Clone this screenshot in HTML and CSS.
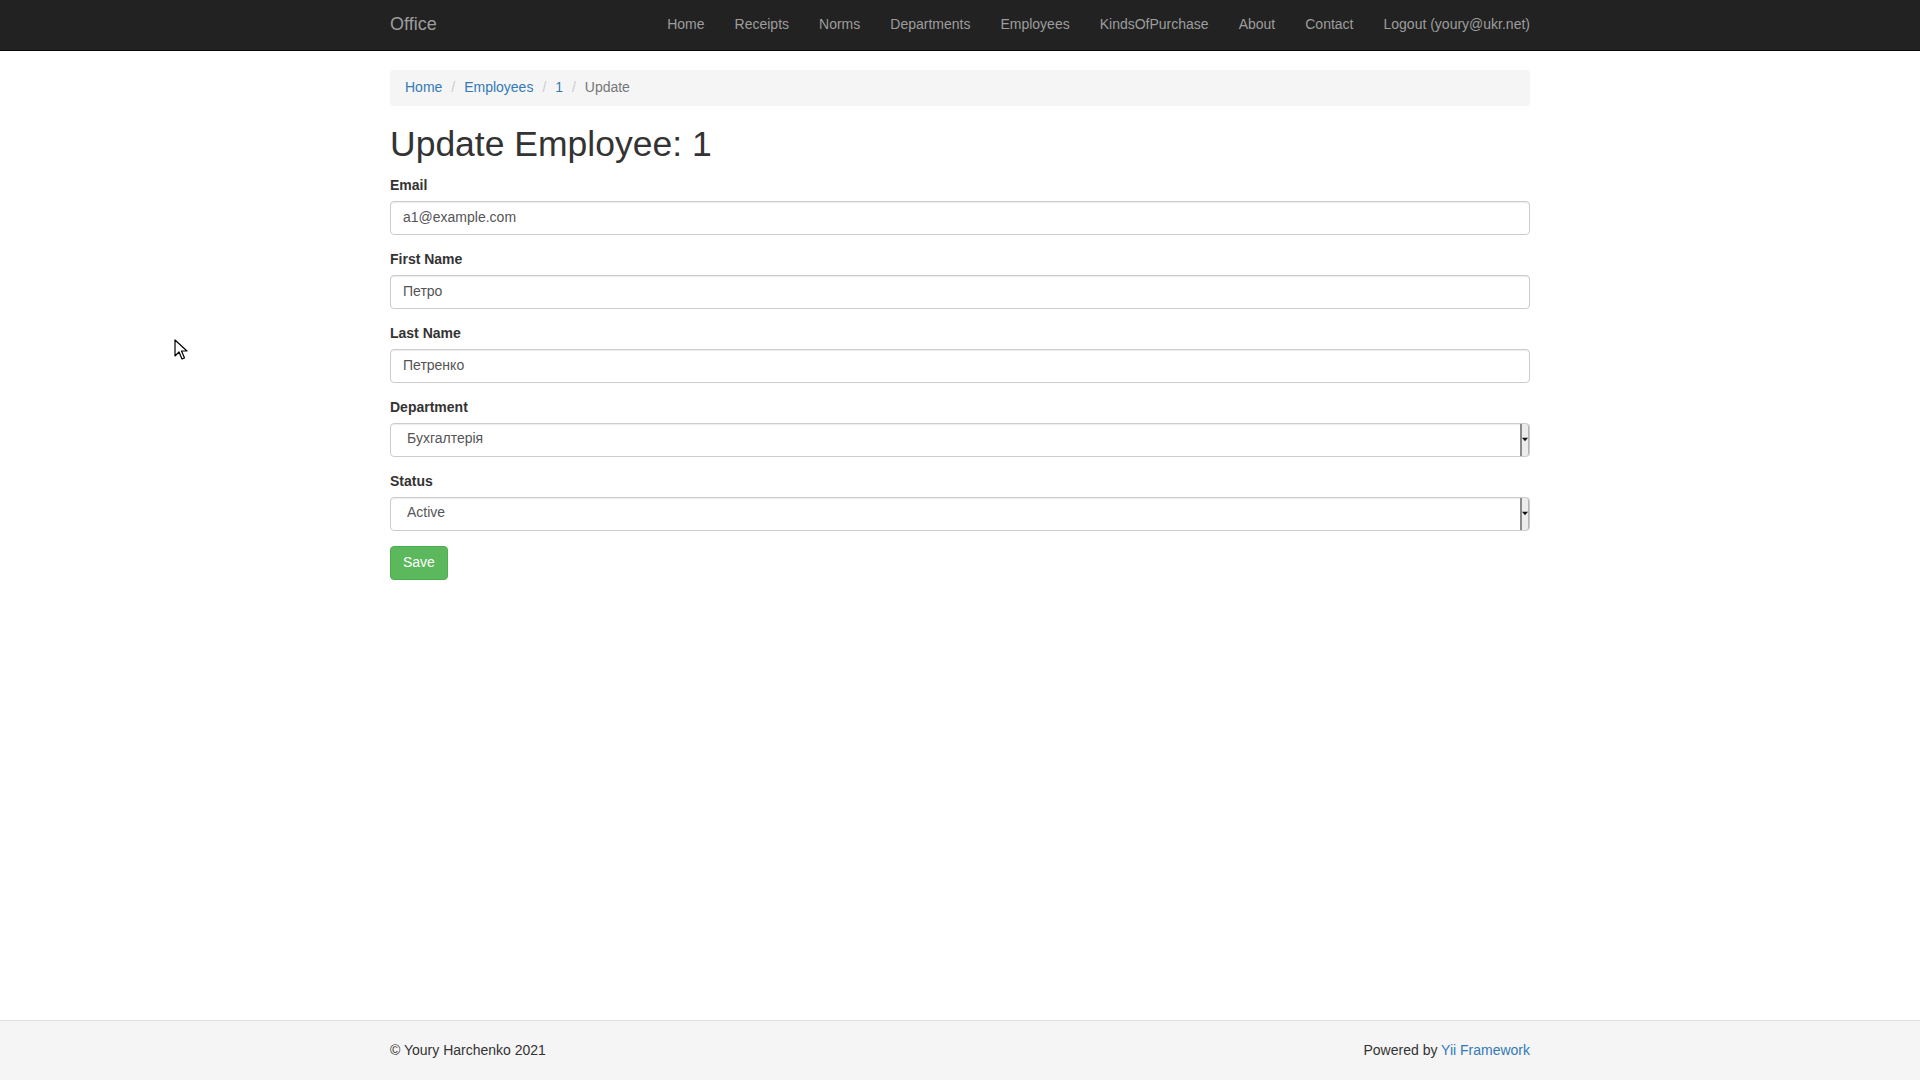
FILE: index.html
```html
<!DOCTYPE html>
<html lang="en">
<head>
<meta charset="utf-8">
<title>Update Employee: 1</title>
<link rel="stylesheet" href="styles.css">
</head>
<body>
<div class="wrap">
  <nav class="navbar">
    <div class="container nav-inner">
      <a class="brand" href="#">Office</a>
      <ul class="nav">
        <li><a href="#">Home</a></li>
        <li><a href="#">Receipts</a></li>
        <li><a href="#">Norms</a></li>
        <li><a href="#">Departments</a></li>
        <li><a href="#">Employees</a></li>
        <li><a href="#">KindsOfPurchase</a></li>
        <li><a href="#">About</a></li>
        <li><a href="#">Contact</a></li>
        <li><a href="#">Logout (youry@ukr.net)</a></li>
      </ul>
    </div>
  </nav>
  <div class="container main">
    <ul class="breadcrumb">
      <li><a href="#">Home</a></li>
      <li><a href="#">Employees</a></li>
      <li><a href="#">1</a></li>
      <li class="active">Update</li>
    </ul>
    <h1>Update Employee: 1</h1>
    <form class="form">
      <div class="form-group">
        <label class="control-label">Email</label>
        <input class="form-control" type="text" value="a1@example.com">
      </div>
      <div class="form-group">
        <label class="control-label">First Name</label>
        <input class="form-control" type="text" value="Петро">
      </div>
      <div class="form-group">
        <label class="control-label">Last Name</label>
        <input class="form-control" type="text" value="Петренко">
      </div>
      <div class="form-group">
        <label class="control-label">Department</label>
        <div class="select-wrap">
          <select class="form-control select"><option>Бухгалтерія</option></select>
          <span class="select-btn"><svg width="7" height="5" viewBox="0 0 7 5"><path d="M0 0.5h7L3.5 4.5z" fill="#111"/></svg></span>
        </div>
      </div>
      <div class="form-group">
        <label class="control-label">Status</label>
        <div class="select-wrap">
          <select class="form-control select"><option>Active</option></select>
          <span class="select-btn"><svg width="7" height="5" viewBox="0 0 7 5"><path d="M0 0.5h7L3.5 4.5z" fill="#111"/></svg></span>
        </div>
      </div>
      <div class="form-actions">
        <button type="button" class="btn btn-success">Save</button>
      </div>
    </form>
  </div>
</div>
<footer class="footer">
  <div class="container footer-inner">
    <p class="left">© Youry Harchenko 2021</p>
    <p class="right">Powered by <a href="#">Yii Framework</a></p>
  </div>
</footer>
<svg class="cursor" width="14" height="22" viewBox="0 0 14 22"><path d="M1 1v16l4-4 3 7 2.5-1-3-7h5.5z" fill="#fff" stroke="#000" stroke-width="1.2" stroke-linejoin="round"/></svg>
</body>
</html>
```

FILE: styles.css
```css
* { box-sizing: border-box; }
html, body { height: 100%; }
body {
  margin: 0;
  font-family: "Liberation Sans", Arial, Helvetica, sans-serif;
  font-size: 14px;
  line-height: 1.42857143;
  color: #333;
  background: #fff;
}
a { color: #337ab7; text-decoration: none; }
.wrap {
  min-height: 100%;
  height: auto;
  margin: 0 auto -60px;
  padding: 0 0 60px;
}
.container {
  width: 1170px;
  margin: 0 auto;
  padding: 0 15px;
}
.navbar {
  position: fixed;
  top: 0; left: 0; right: 0;
  z-index: 10;
  height: 51px;
  background: #222;
  border-bottom: 1px solid #080808;
}
.nav-inner {
  display: flex;
  justify-content: space-between;
  align-items: stretch;
  height: 50px;
}
.brand {
  margin-left: -15px;
  padding: 14px 15px 16px;
  font-size: 18px;
  line-height: 20px;
  color: #9d9d9d;
}
.nav {
  list-style: none;
  margin: 0 -15px 0 0;
  padding: 0;
  display: flex;
}
.nav a {
  display: block;
  padding: 14px 15px 16px;
  line-height: 20px;
  color: #9d9d9d;
}
.main { padding: 70px 15px 20px; }
.breadcrumb {
  list-style: none;
  margin: 0 0 20px;
  padding: 7px 15px 9px;
  height: 36px;
  background: #f5f5f5;
  border-radius: 4px;
  display: flex;
  gap: 4px;
  line-height: 20px;
}
.breadcrumb li + li::before {
  content: "/\00a0";
  padding: 0 5px;
  color: #ccc;
}
.breadcrumb .active { color: #777; }
h1 {
  margin: 20px 0 10px;
  padding-bottom: 3.6px;
  font-size: 35.5px;
  font-weight: 500;
  line-height: 36px;
}
.form-group { margin-bottom: 15px; }
.control-label {
  display: block;
  width: max-content;
  line-height: 18px;
  padding-bottom: 2px;
  margin-bottom: 5px;
  font-weight: bold;
}
.form-control {
  display: block;
  width: 100%;
  height: 34px;
  padding: 5px 12px 7px;
  font-family: inherit;
  font-size: 14px;
  line-height: 1.42857143;
  color: #555;
  background: #fff;
  border: 1px solid #ccc;
  border-radius: 4px;
  box-shadow: inset 0 1px 1px rgba(0,0,0,.075);
  margin: 0;
}
.select-wrap { position: relative; }
.select {
  -webkit-appearance: none;
  appearance: none;
  padding: 4px 12px 8px 16px;
}
.select-btn {
  position: absolute;
  top: 1px;
  bottom: 1px;
  right: 1px;
  width: 9px;
  background: #ececec;
  border-left: 2px solid #8a8a8a;
  border-right: 1px solid #b5b5b5;
  border-radius: 0 3px 3px 0;
  display: flex;
  align-items: center;
  justify-content: center;
  pointer-events: none;
}
.select-btn svg { display: block; }
.btn {
  display: inline-block;
  padding: 5px 12px 7px;
  font-family: inherit;
  font-size: 14px;
  line-height: 1.42857143;
  border: 1px solid transparent;
  border-radius: 4px;
  cursor: pointer;
}
.btn-success {
  color: #fff;
  background: #5cb85c;
  border-color: #4cae4c;
}
.footer {
  height: 60px;
  background: #f5f5f5;
  border-top: 1px solid #ddd;
  padding-top: 19px;
}
.footer-inner {
  display: flex;
  justify-content: space-between;
}
.footer p { margin: 0 0 10px; }
.cursor {
  position: absolute;
  left: 174px;
  top: 339px;
}
```
